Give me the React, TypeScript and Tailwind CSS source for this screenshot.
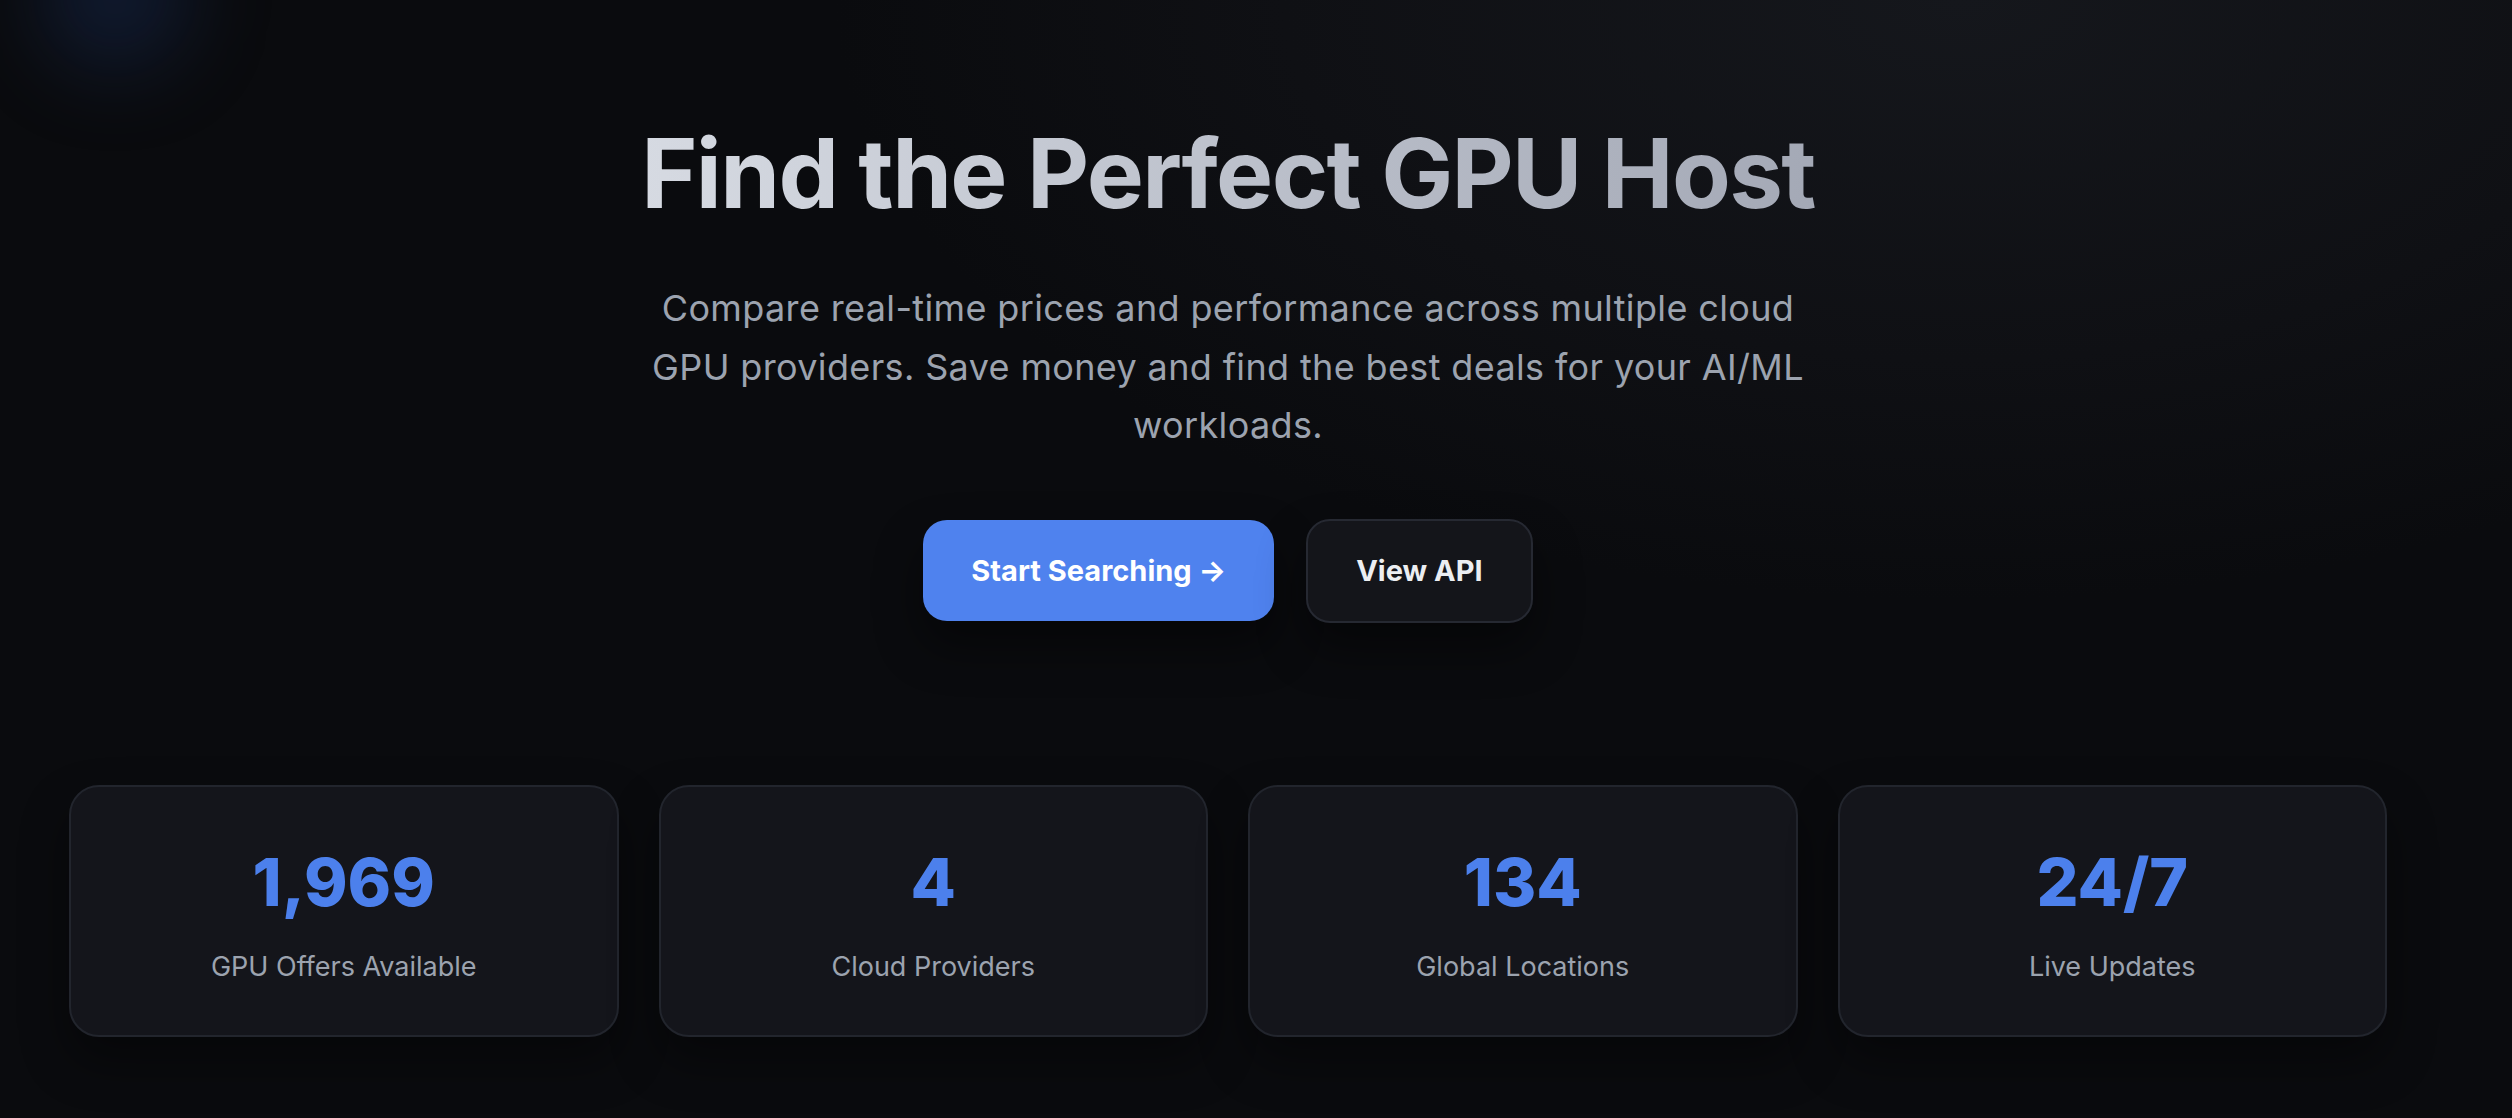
const stats = [
  ["1,969", "GPU Offers Available"],
  ["4", "Cloud Providers"],
  ["134", "Global Locations"],
  ["24/7", "Live Updates"],
] as const;

export default function App() {
  return (
    <div className="relative min-h-screen w-full overflow-hidden bg-[#0a0b0e] font-['Inter','Noto_Sans',sans-serif]">
      {/* soft light from the top right */}
      <div className="pointer-events-none absolute inset-0 bg-[radial-gradient(ellipse_1500px_800px_at_78%_0%,#15171c_0%,#0f1014_45%,transparent_75%)]" />
      {/* blue glow, top left */}
      <div className="pointer-events-none absolute -top-[80px] left-[40px] h-[150px] w-[150px] rounded-full bg-[#1d3a7a]/30 blur-[40px]" />

      <main className="relative w-[2456px] px-[69px] pt-[125px] pb-[81px]">
        <section className="flex flex-col items-center text-center">
          <h1 className="bg-gradient-to-r from-[#d6dae2] to-[#a4a9b6] bg-clip-text text-[96px] font-bold leading-none tracking-[-0.017em] text-transparent">
            Find the Perfect GPU Host
          </h1>
          <p className="mt-[58px] max-w-[1170px] text-[36px] leading-[58.5px] tracking-[0.01em] text-[#9ca3af]">
            Compare real-time prices and performance across multiple cloud GPU providers. Save money and find the best deals for your AI/ML workloads.
          </p>
          <div className="mt-[64px] flex items-center gap-8">
            <button className="flex h-[101px] items-center rounded-[24px] bg-[#4f82ee] px-[48px] text-[29px] font-bold text-white shadow-[0_24px_48px_rgba(0,0,0,0.45)]">
              Start Searching →
            </button>
            <button className="flex h-[104px] items-center rounded-[24px] border-2 border-[#262932] bg-[#14151a] px-[48px] text-[29px] font-bold text-[#eceef2] shadow-[0_24px_48px_rgba(0,0,0,0.45)]">
              View API
            </button>
          </div>
        </section>

        <section className="mt-[162px] grid grid-cols-4 gap-10">
          {stats.map(([value, label]) => (
            <div key={label} className="flex flex-col items-center rounded-[30px] border-2 border-[#22252d] bg-[#14151b] pt-[62px] pb-[48px] shadow-[0_24px_48px_rgba(0,0,0,0.4)]">
              <span className="text-[66px] font-extrabold leading-none text-[#4c80ec]">{value}</span>
              <span className="mt-[32px] text-[27px] leading-[40px] text-[#9ca3af]">{label}</span>
            </div>
          ))}
        </section>
      </main>
    </div>
  );
}
